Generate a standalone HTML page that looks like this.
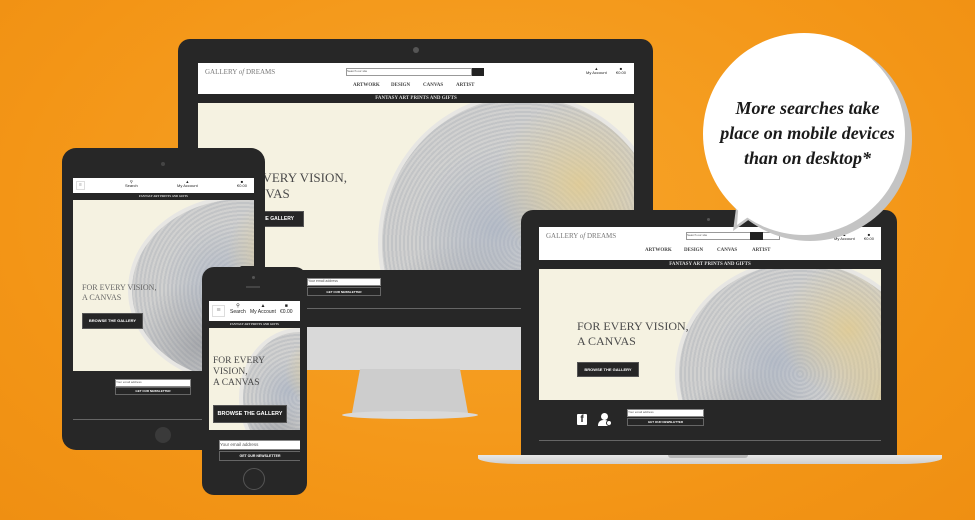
<!DOCTYPE html>
<html><head><style>
*{margin:0;padding:0;box-sizing:border-box}
body{width:975px;height:520px;overflow:hidden;background:radial-gradient(ellipse at 50% 40%,#f7a52a,#f39516 70%,#ef8f12);font-family:"Liberation Sans",sans-serif;position:relative}
.abs{position:absolute}
.dev{position:absolute;background:#272727}
.scr{position:absolute;overflow:hidden;background:#272727}
.hdr{position:absolute;left:0;top:0;width:100%;background:#fff}
.strip{position:absolute;left:0;width:100%;background:#262626;color:#ddd;font-family:"Liberation Serif",serif;font-weight:bold;text-align:center;white-space:nowrap}
.hero{position:absolute;left:0;width:100%;background:#f5f2e1;overflow:hidden}
.art{position:absolute;border-radius:50%;border:4px solid #e4e4e4;
background:
radial-gradient(circle at 70% 30%,rgba(225,195,115,.75) 0,rgba(225,195,115,0) 30%),
radial-gradient(circle at 85% 60%,rgba(220,190,110,.6) 0,rgba(220,190,110,0) 25%),
radial-gradient(circle at 40% 45%,rgba(140,155,185,.55) 0,rgba(140,155,185,0) 35%),
radial-gradient(circle at 30% 80%,rgba(90,95,110,.45) 0,rgba(90,95,110,0) 30%),
repeating-radial-gradient(circle at 50% 50%,#c9cacd 0 2px,#b6b9c0 2px 4px),
#c4c6ca;opacity:.8}
.ht{position:absolute;font-family:"Liberation Serif",serif;color:#4a4a4a;white-space:nowrap}
.btn{position:absolute;background:#262626;color:#fff;font-weight:bold;text-align:center;white-space:nowrap;border:1px solid #555}
.inp{position:absolute;background:#fff;color:#555;border:1px solid #888;white-space:nowrap;overflow:hidden}
.nb{position:absolute;background:#262626;color:#fff;font-weight:bold;text-align:center;border:1px solid #666;white-space:nowrap}
.line{position:absolute;left:0;width:100%;height:1px;background:#666}
.logo{position:absolute;font-family:"Liberation Serif",serif;color:#777;white-space:nowrap}
.nav{position:absolute;font-family:"Liberation Serif",serif;font-weight:bold;color:#444;white-space:nowrap}
.ic{position:absolute;color:#222;text-align:center;white-space:nowrap;line-height:1.1}
</style></head><body>

<!-- DESKTOP -->
<div class="dev" style="left:178px;top:39px;width:475px;height:289px;border-radius:12px 12px 0 0"></div>
<div class="abs" style="left:413px;top:47px;width:6px;height:6px;border-radius:50%;background:#555"></div>
<div class="abs" style="left:178px;top:327px;width:475px;height:43px;background:#d9d9d9"></div>
<svg class="abs" style="left:330px;top:369px" width="160" height="52"><polygon points="30,0 130,0 138,44 22,44" fill="#cdcdcd"/><ellipse cx="80" cy="46" rx="68" ry="4" fill="#d9d9d9"/></svg>
<div class="scr" style="left:198px;top:63px;width:436px;height:264px">
 <div class="hdr" style="height:31px">
  <div class="logo" style="left:7px;top:5px;font-size:7px">GALLERY <i>of</i> DREAMS</div>
  <div class="inp" style="left:148px;top:5px;width:126px;height:8px;font-size:3px;border-color:#999">Search our site</div>
  <div class="abs" style="left:274px;top:5px;width:12px;height:8px;background:#222"></div>
  <div class="ic" style="left:388px;top:4px;font-size:4px">▲<br>My Account</div>
  <div class="ic" style="left:418px;top:4px;font-size:4px">■<br>€0.00</div>
  <div class="nav" style="left:155px;top:20px;font-size:5px">ARTWORK</div>
  <div class="nav" style="left:193px;top:20px;font-size:5px">DESIGN</div>
  <div class="nav" style="left:225px;top:20px;font-size:5px">CANVAS</div>
  <div class="nav" style="left:258px;top:20px;font-size:5px">ARTIST</div>
 </div>
 <div class="strip" style="top:31px;height:9px;font-size:5px;line-height:9px">FANTASY ART PRINTS AND GIFTS</div>
 <div class="hero" style="top:40px;height:167px">
  <div class="art" style="left:180px;top:-10px;width:290px;height:300px"></div>
  <div class="ht" style="left:28px;top:67px;font-size:13px;line-height:16px">FOR EVERY VISION,<br>A CANVAS</div>
  <div class="btn" style="left:27px;top:108px;width:79px;height:16px;font-size:5px;line-height:14px">BROWSE THE GALLERY</div>
 </div>
 <div class="inp" style="left:109px;top:215px;width:74px;height:8px;font-size:3.5px">Your email address</div>
 <div class="nb" style="left:109px;top:224px;width:74px;height:9px;font-size:3px;line-height:8px">GET OUR NEWSLETTER</div>
 <div class="line" style="top:245px"></div>
</div>

<!-- TABLET -->
<div class="dev" style="left:62px;top:148px;width:203px;height:302px;border-radius:14px"></div>
<div class="abs" style="left:161px;top:162px;width:4px;height:4px;border-radius:50%;background:#444"></div>
<div class="abs" style="left:155px;top:427px;width:16px;height:16px;border-radius:50%;background:#3a3a3a"></div>
<div class="scr" style="left:73px;top:178px;width:181px;height:242px">
 <div class="hdr" style="height:15px">
  <div class="abs" style="left:3px;top:3px;width:9px;height:9px;border:1px solid #ddd;font-size:5px;color:#999;text-align:center">≡</div>
  <div class="ic" style="left:52px;top:2px;font-size:4px">⚲<br>Search</div>
  <div class="ic" style="left:104px;top:2px;font-size:4px">▲<br>My Account</div>
  <div class="ic" style="left:164px;top:2px;font-size:4px">■<br>€0.00</div>
 </div>
 <div class="strip" style="top:15px;height:7px;font-size:3px;line-height:7px">FANTASY ART PRINTS AND GIFTS</div>
 <div class="hero" style="top:22px;height:171px">
  <div class="art" style="left:55px;top:-5px;width:230px;height:190px"></div>
  <div class="ht" style="left:9px;top:83px;font-size:8px;line-height:10px;color:#666">FOR EVERY VISION,<br>A CANVAS</div>
  <div class="btn" style="left:9px;top:113px;width:61px;height:16px;font-size:4px;line-height:14px">BROWSE THE GALLERY</div>
 </div>
 <div class="inp" style="left:42px;top:201px;width:76px;height:8px;font-size:3px">Your email address</div>
 <div class="nb" style="left:42px;top:209px;width:76px;height:8px;font-size:3px;line-height:7px">GET OUR NEWSLETTER</div>
 <div class="line" style="top:241px"></div>
</div>

<!-- PHONE -->
<div class="dev" style="left:202px;top:267px;width:105px;height:228px;border-radius:12px"></div>
<div class="abs" style="left:240px;top:266px;width:25px;height:4px;border-radius:2px;background:#272727"></div>
<div class="abs" style="left:252px;top:276px;width:3px;height:3px;border-radius:50%;background:#555"></div>
<div class="abs" style="left:246px;top:286px;width:14px;height:2px;background:#444"></div>
<div class="abs" style="left:243px;top:468px;width:22px;height:22px;border-radius:50%;border:1.5px solid #555"></div>
<div class="scr" style="left:209px;top:301px;width:91px;height:162px">
 <div class="hdr" style="height:20px">
  <div class="abs" style="left:3px;top:4px;width:13px;height:12px;border:1px solid #ddd;font-size:7px;color:#999;text-align:center;line-height:10px">≡</div>
  <div class="ic" style="left:21px;top:3px;font-size:5px">⚲<br>Search</div>
  <div class="ic" style="left:41px;top:3px;font-size:5px">▲<br>My Account</div>
  <div class="ic" style="left:71px;top:3px;font-size:5px">■<br>€0.00</div>
 </div>
 <div class="strip" style="top:20px;height:7px;font-size:3px;line-height:7px">FANTASY ART PRINTS AND GIFTS</div>
 <div class="hero" style="top:27px;height:102px">
  <div class="art" style="left:30px;top:0px;width:120px;height:140px"></div>
  <div class="ht" style="left:4px;top:28px;font-size:9.5px;line-height:11px">FOR EVERY<br>VISION,<br>A CANVAS</div>
  <div class="btn" style="left:4px;top:77px;width:74px;height:18px;font-size:5.5px;line-height:16px">BROWSE THE GALLERY</div>
 </div>
 <div class="inp" style="left:10px;top:139px;width:82px;height:10px;font-size:4.5px;line-height:8px">Your email address</div>
 <div class="nb" style="left:10px;top:150px;width:82px;height:10px;font-size:3.5px;line-height:9px">GET OUR NEWSLETTER</div>
</div>

<!-- LAPTOP -->
<div class="dev" style="left:521px;top:210px;width:376px;height:250px;border-radius:12px 12px 0 0"></div>
<div class="abs" style="left:707px;top:218px;width:3px;height:3px;border-radius:50%;background:#555"></div>
<div class="abs" style="left:478px;top:455px;width:464px;height:9px;background:linear-gradient(#e8e8e8,#cfcfcf);border-radius:0 0 40px 40px/0 0 6px 6px"></div>
<div class="abs" style="left:668px;top:455px;width:80px;height:3px;background:#b8b8b8;border-radius:0 0 4px 4px"></div>
<div class="scr" style="left:539px;top:227px;width:342px;height:214px">
 <div class="hdr" style="height:33px">
  <div class="logo" style="left:7px;top:5px;font-size:7px">GALLERY <i>of</i> DREAMS</div>
  <div class="inp" style="left:147px;top:5px;width:94px;height:8px;font-size:3px;border-color:#999">Search our site</div>
  <div class="abs" style="left:211px;top:5px;width:13px;height:8px;background:#222"></div>
  <div class="ic" style="left:295px;top:6px;font-size:4px">▲<br>My Account</div>
  <div class="ic" style="left:325px;top:6px;font-size:4px">■<br>€0.00</div>
  <div class="nav" style="left:106px;top:21px;font-size:5px">ARTWORK</div>
  <div class="nav" style="left:145px;top:21px;font-size:5px">DESIGN</div>
  <div class="nav" style="left:178px;top:21px;font-size:5px">CANVAS</div>
  <div class="nav" style="left:213px;top:21px;font-size:5px">ARTIST</div>
 </div>
 <div class="strip" style="top:33px;height:9px;font-size:5px;line-height:9px">FANTASY ART PRINTS AND GIFTS</div>
 <div class="hero" style="top:42px;height:131px">
  <div class="art" style="left:136px;top:-10px;width:250px;height:230px"></div>
  <div class="ht" style="left:38px;top:50px;font-size:12px;line-height:15px">FOR EVERY VISION,<br>A CANVAS</div>
  <div class="btn" style="left:38px;top:93px;width:62px;height:15px;font-size:4px;line-height:13px">BROWSE THE GALLERY</div>
 </div>
 <div class="abs" style="left:38px;top:187px;width:10px;height:11px;background:#fff;border-radius:1px;color:#262626;font-weight:bold;font-size:10px;line-height:12px;text-align:center">f</div>
 <div class="abs" style="left:62px;top:186px;width:7px;height:7px;border-radius:50%;background:#fff"></div>
 <div class="abs" style="left:59px;top:193px;width:12px;height:6px;border-radius:5px 5px 0 0;background:#fff"></div>
 <div class="abs" style="left:67px;top:193px;width:6px;height:6px;border-radius:50%;background:#fff;border:1px solid #262626"></div>
 <div class="inp" style="left:88px;top:182px;width:77px;height:8px;font-size:3px">Your email address</div>
 <div class="nb" style="left:88px;top:191px;width:77px;height:8px;font-size:3px;line-height:7px">GET OUR NEWSLETTER</div>
 <div class="line" style="top:213px"></div>
</div>

<!-- BUBBLE -->
<svg class="abs" style="left:690px;top:28px" width="230" height="215">
 <circle cx="120" cy="111" r="102" fill="#c4c4c4"/>
 <polygon points="48,165 75,180 43,203" fill="#c4c4c4"/>
 <circle cx="114" cy="106" r="101" fill="#fff"/>
 <polygon points="50,160 78,175 47,197" fill="#fff"/>
</svg>
<div class="abs" style="left:700px;top:96px;width:215px;text-align:center;font-family:'Liberation Serif',serif;font-style:italic;font-weight:bold;font-size:18px;line-height:25px;color:#1a1a1a">More searches take<br>place on mobile devices<br>than on desktop*</div>

</body></html>
